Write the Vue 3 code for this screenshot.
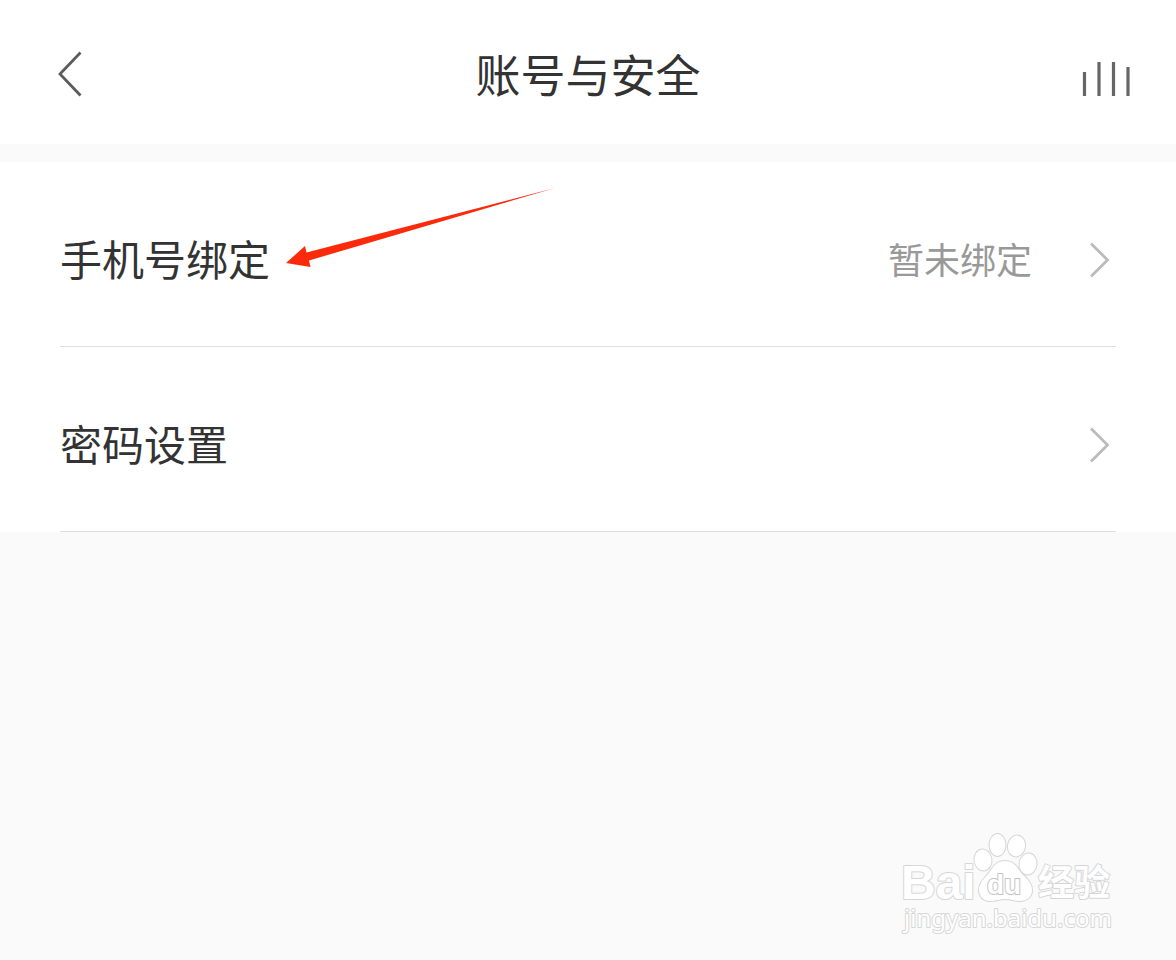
<script setup>
const rows = [
  { id: 'phone', label: '手机号绑定', value: '暂未绑定', marked: true },
  { id: 'password', label: '密码设置', value: '', marked: false },
]
</script>

<template>
  <div class="page">
    <header class="bar">
      <button class="icon-btn back" type="button" aria-label="返回">
        <svg width="24" height="46" viewBox="0 0 24 46" fill="none">
          <path d="M22.5 1.5 2 23l20.5 21.5" stroke="#5c5c5c" stroke-width="2.8" />
        </svg>
      </button>
      <h1 class="title">账号与安全</h1>
      <button class="icon-btn more" type="button" aria-label="更多">
        <svg width="48" height="34" viewBox="0 0 48 34" fill="none">
          <path d="M2.5 10v24M17 0v34M31.5 0v34M46 5v29" stroke="#666" stroke-width="3.2" />
        </svg>
      </button>
    </header>

    <main class="list">
      <button v-for="row in rows" :key="row.id" class="row" type="button">
        <span class="label">
          {{ row.label }}
          <svg v-if="row.marked" class="pointer" width="270" height="80" viewBox="0 0 270 80" aria-hidden="true">
            <path d="M0 75 19 58l1.5 6.500L269 0 23 72.500l1.500 6.500Z" fill="#fb2a0a" />
          </svg>
        </span>
        <span class="value">{{ row.value }}</span>
        <svg class="chevron" width="20" height="36" viewBox="0 0 20 36" fill="none" aria-hidden="true">
          <path d="M1 1.500 17.500 18 1 34.500" stroke="#bbb" stroke-width="2.800" />
        </svg>
      </button>
    </main>

    <svg class="watermark" width="240" height="130" viewBox="0 0 240 130" role="img" aria-label="Baidu 经验">
      <g class="mark">
        <text class="bai" x="11" y="79">Bai</text>
        <ellipse cx="93" cy="40" rx="8.500" ry="10.500" transform="rotate(-8 93 40)" />
        <ellipse cx="107.500" cy="25" rx="8" ry="11" />
        <ellipse cx="126.500" cy="26" rx="8.500" ry="10.500" transform="rotate(10 126.500 26)" />
        <ellipse cx="138" cy="44" rx="8.500" ry="10.500" transform="rotate(8 138 44)" />
        <path d="M115 41c7 0 11 4 14 9 4 6 13 11 13 20 0 7-5 11-12 11-6 0-9-2-15-2s-9 2-15 2c-7 0-11-5-11-11 0-9 8-13 12-20 3-5 7-9 14-9Z" />
        <text class="du" x="97" y="74">du</text>
        <text class="jingyan" x="148" y="76">经验</text>
        <text class="site" x="14" y="107">jingyan.baidu.com</text>
      </g>
    </svg>
  </div>
</template>

<style>
body {
  margin: 0;
  background: #fafafa;
}
</style>

<style scoped>
.page {
  position: relative;
  min-height: 100vh;
  background: #fafafa;
  color: #333;
  font-family: "Noto Sans CJK SC", sans-serif;
}

.bar {
  display: grid;
  grid-template-columns: 1fr auto 1fr;
  align-items: center;
  box-sizing: border-box;
  height: 144px;
  padding: 8px 46px 0 56px;
  background: #fff;
}

.title {
  margin: 0;
  padding: 0 10px 4px 0;
  font-size: 45px;
  font-weight: 400;
  line-height: 64px;
}

.icon-btn {
  display: flex;
  padding: 0;
  border: 0;
  background: none;
}

.back {
  justify-self: start;
  padding: 0 2px 4px;
}

.more {
  justify-self: end;
  padding-top: 6px;
}

.list {
  margin-top: 18px;
  padding: 0 60px;
  background: #fff;
}

.row {
  display: flex;
  align-items: center;
  box-sizing: border-box;
  width: 100%;
  height: 185px;
  padding: 12px 6px 0 0;
  border: 0;
  border-bottom: 1px solid #dedede;
  background: none;
  color: inherit;
  font-family: inherit;
  text-align: left;
}

.label {
  position: relative;
  padding-bottom: 4px;
  font-size: 42px;
  line-height: 60px;
}

.pointer {
  position: absolute;
  left: 226px;
  bottom: 24px;
}

.value {
  margin-left: auto;
  margin-right: 58px;
  padding-bottom: 4px;
  color: #999;
  font-size: 36px;
  line-height: 52px;
}

.watermark {
  position: absolute;
  right: 46px;
  bottom: 10px;
}

.mark {
  fill: #fff;
  stroke: #d6d6d6;
  stroke-width: 2px;
  stroke-linejoin: round;
  paint-order: stroke;
}

.bai {
  font: 700 48px "Liberation Sans", sans-serif;
}

.du {
  font: 700 28px "Liberation Sans", sans-serif;
  stroke: #c4c4c4;
}

.jingyan {
  font: 700 36px "Noto Sans CJK SC", sans-serif;
}

.site {
  font: 400 24px "Noto Sans", sans-serif;
}
</style>
